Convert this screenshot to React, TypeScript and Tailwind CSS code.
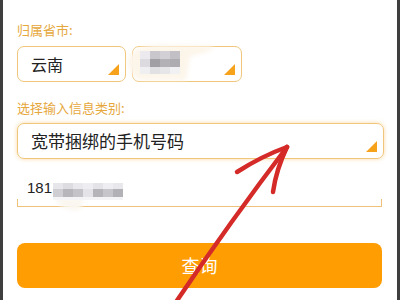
import React from "react";

const font = { fontFamily: '"Noto Sans CJK SC", "Noto Sans", sans-serif' };

function Tri() {
  return (
    <svg width="11" height="11" viewBox="0 0 11 11" className="absolute right-[6px] bottom-[6px]">
      <polygon points="11,0 11,11 0,11" fill="#f7a21b" />
    </svg>
  );
}

export default function App() {
  return (
    <div className="relative w-[400px] h-[300px] flex overflow-hidden bg-white" style={font}>
      <div className="w-[3px] bg-[#3e3e3e]" />
      <div className="flex-1 flex flex-col pl-[14px] pr-[13px] pt-[22px] bg-white">
        <div className="text-[13px] leading-[16px] text-[#e6a73c]">归属省市:</div>
        <div className="mt-[8px] flex gap-[6px]">
          <div className="relative w-[109px] h-[36px] rounded-[7px] border border-[#f0c67a] flex items-center pl-[13px] text-[16px] text-[#222]">
            云南
            <Tri />
          </div>
          <div className="relative w-[110px] h-[36px] rounded-[7px] border border-[#f0c67a]">
            <Tri />
          </div>
        </div>
        <div className="mt-[18px] text-[13px] leading-[16px] text-[#e6a73c]">选择输入信息类别:</div>
        <div className="relative mt-[7px] h-[36px] rounded-[7px] border border-[#f0c67a] shadow-[0_0_4px_rgba(245,170,50,0.45)] flex items-center pl-[13px] text-[17px] text-[#222]">
          宽带捆绑的手机号码
          <Tri />
        </div>
        <div className="mt-[23px] mr-[2px] h-[25px] border-b border-[#eec27a] flex items-end">
          <div className="w-px h-[7px] bg-[#eec27a]" />
          <div className="flex-1 self-stretch pl-[9px]">
            <span className="block text-[15px] leading-[18px] text-[#222] -mt-[3px]" style={{ fontFamily: '"Liberation Sans", sans-serif' }}>181</span>
          </div>
          <div className="w-px h-[7px] bg-[#eec27a]" />
        </div>
        <div className="mt-[36px] mr-[2px] h-[45px] rounded-[8px] bg-[#ff9d03] flex items-center justify-center text-[18px] text-white">
          查询
        </div>
      </div>
      <div className="w-[3px] bg-[#3e3e3e]" />

      <svg className="absolute left-0 top-0 pointer-events-none" width="400" height="300" viewBox="0 0 400 300">
        <defs>
          <filter id="soft" x="-20%" y="-20%" width="140%" height="140%">
            <feGaussianBlur stdDeviation="2" />
          </filter>
        </defs>
        <path d="M128 60 Q132 46 160 45 L214 46 Q212 52 190 56 L186 80 L140 80 Q128 74 128 60 Z" fill="#fcf5ea" filter="url(#soft)" />
        <g>
          <rect x="140" y="51" width="10" height="8" fill="#eceaee" />
          <rect x="150" y="51" width="10" height="8" fill="#c9c7cc" />
          <rect x="160" y="51" width="10" height="8" fill="#d2d0d5" />
          <rect x="170" y="51" width="10" height="8" fill="#c2c0c5" />
          <rect x="140" y="59" width="10" height="8" fill="#dcdadf" />
          <rect x="150" y="59" width="10" height="8" fill="#a19fa4" />
          <rect x="160" y="59" width="10" height="8" fill="#b3b1b6" />
          <rect x="170" y="59" width="10" height="8" fill="#aeacb1" />
          <rect x="140" y="67" width="10" height="7" fill="#efeef1" />
          <rect x="150" y="67" width="10" height="7" fill="#e1e0e3" />
          <rect x="160" y="67" width="10" height="7" fill="#e6e5e8" />
          <rect x="170" y="67" width="10" height="7" fill="#f1f0f3" />
        </g>
        <path d="M55 198 Q62 212 80 210 L84 198 Z" fill="#fbf7f0" filter="url(#soft)" />
        <g>
          <rect x="53" y="183" width="10" height="6" fill="#e7e6ea" />
          <rect x="63" y="183" width="10" height="6" fill="#dddce0" />
          <rect x="73" y="183" width="10" height="6" fill="#e9e8ec" />
          <rect x="83" y="183" width="10" height="6" fill="#eeedf1" />
          <rect x="93" y="183" width="10" height="6" fill="#e4e3e7" />
          <rect x="103" y="183" width="10" height="6" fill="#eeedf1" />
          <rect x="113" y="183" width="10" height="6" fill="#e8e7eb" />
          <rect x="53" y="189" width="10" height="8" fill="#cfced2" />
          <rect x="63" y="189" width="10" height="8" fill="#b7b6ba" />
          <rect x="73" y="189" width="10" height="8" fill="#c4c3c7" />
          <rect x="83" y="189" width="10" height="8" fill="#e4e3e7" />
          <rect x="93" y="189" width="10" height="8" fill="#b5b4b8" />
          <rect x="103" y="189" width="10" height="8" fill="#c6c5c9" />
          <rect x="113" y="189" width="10" height="8" fill="#b2b1b5" />
          <rect x="53" y="197" width="70" height="3" fill="#f4f3f6" />
        </g>
        <g stroke="#d42a28" strokeWidth="4.5" strokeLinecap="round" strokeLinejoin="round" fill="none">
          <path d="M176 302 Q230 222 287 147" />
          <path d="M237 172 Q262 156 287 147" />
          <path d="M287 147 Q276 170 273 192" />
        </g>
      </svg>
    </div>
  );
}
